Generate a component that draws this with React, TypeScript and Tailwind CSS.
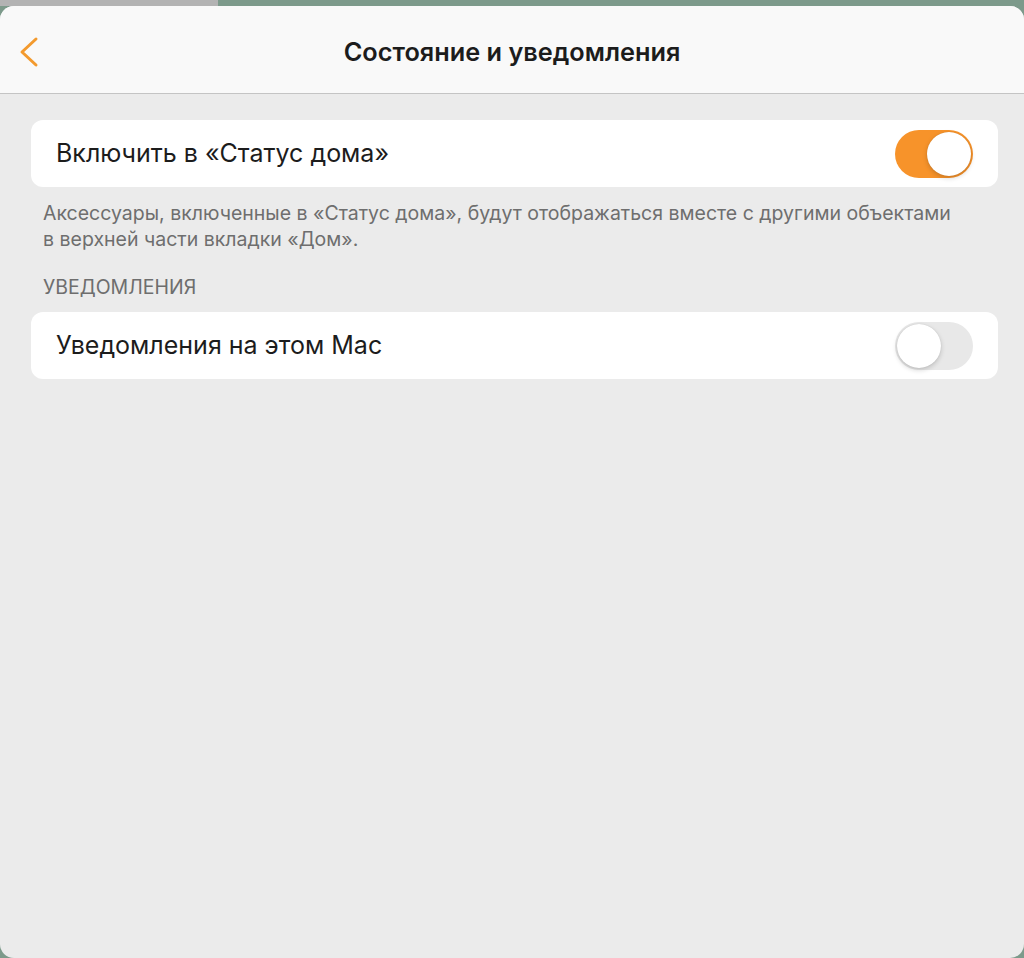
import React from "react";

function Toggle({ on }: { on: boolean }) {
  return (
    <div
      className={
        on
          ? "flex h-[48px] w-[78px] shrink-0 items-center justify-end rounded-full bg-[#f7932a] p-[2px]"
          : "flex h-[48px] w-[78px] shrink-0 items-center justify-start rounded-full bg-[#e8e8e8] p-[2px]"
      }
    >
      <div className="h-[44px] w-[44px] rounded-full bg-white shadow-[0_2px_5px_rgba(0,0,0,0.18),0_0_1px_rgba(0,0,0,0.15)]" />
    </div>
  );
}

function Row({ label, on }: { label: string; on: boolean }) {
  return (
    <div className="flex h-[67px] items-center justify-between rounded-[12px] bg-white pl-[25px] pr-[25px]">
      <span className="text-[25px] text-[#1c1c1c]">{label}</span>
      <Toggle on={on} />
    </div>
  );
}

export default function App() {
  return (
    <div
      className="flex h-[958px] w-[1024px] flex-col overflow-hidden bg-[#7d9a8b]"
      style={{ fontFamily: "Inter, 'Noto Sans', sans-serif" }}
    >
      <div className="flex h-[6px] shrink-0">
        <div className="w-[218px] bg-[#b3b3b3]" />
        <div className="flex-1 bg-[#7d9a8b]" />
      </div>

      <div className="flex flex-1 flex-col overflow-hidden rounded-[14px] bg-[#ebebeb]">
        <header className="relative flex h-[88px] shrink-0 items-center justify-center border-b border-[#c4c4c4] bg-[#f9f9f9] pt-[4px]">
          <button className="absolute left-[18px] top-[30px] p-0">
            <svg width="22" height="32" viewBox="0 0 22 32" fill="none">
              <path
                d="M18 3 L4 16 L18 29"
                stroke="#f39a2e"
                strokeWidth="3"
                strokeLinecap="round"
                strokeLinejoin="round"
              />
            </svg>
          </button>
          <h1 className="text-[25.3px] font-semibold text-[#1c1c1c]">Состояние и уведомления</h1>
        </header>

        <main className="flex flex-col pl-[31px] pr-[26px] pt-[26px]">
          <Row label="Включить в «Статус дома»" on={true} />
          <p className="px-[12px] pt-[13px] text-[19.5px] leading-[26px] text-[#6e6e6e]">
            Аксессуары, включенные в «Статус дома», будут отображаться вместе с другими объектами
            <br />в верхней части вкладки «Дом».
          </p>
          <h2 className="px-[12px] pt-[22px] pb-[12px] text-[19.5px] leading-[26px] text-[#6e6e6e]">УВЕДОМЛЕНИЯ</h2>
          <Row label="Уведомления на этом Mac" on={false} />
        </main>
      </div>
    </div>
  );
}
